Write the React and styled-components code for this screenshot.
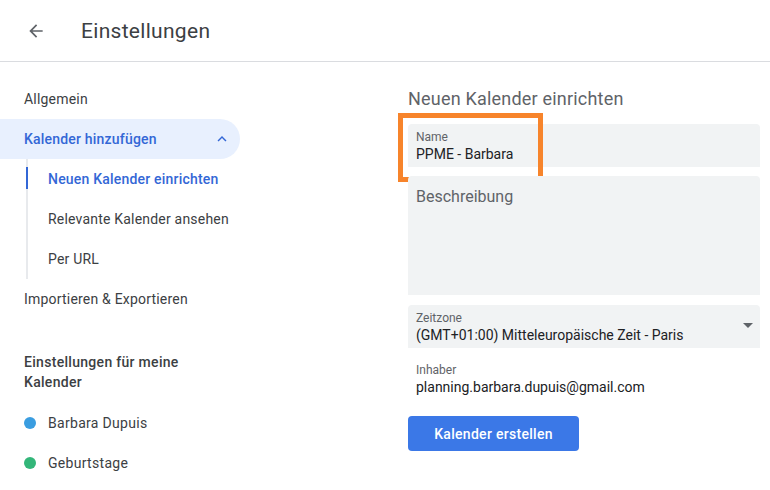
import React from "react";
import styled, { createGlobalStyle } from "styled-components";

const GlobalStyle = createGlobalStyle`
  body {
    margin: 0;
    background: #fff;
    font-family: Roboto, "Liberation Sans", Arial, sans-serif;
    color: #3c4043;
  }
`;

const Page = styled.div`
  width: 770px;
  height: 490px;
  overflow: hidden;
`;

const Header = styled.header`
  height: 62px;
  display: flex;
  align-items: center;
  border-bottom: 1px solid #dadce0;
  box-sizing: border-box;
`;

const BackButton = styled.div`
  width: 24px;
  height: 24px;
  margin-left: 24px;
  margin-right: 33px;
  display: flex;
  align-items: center;
  justify-content: center;
  color: #5f6368;
`;

const Title = styled.h1`
  margin: 0;
  font-size: 21px;
  font-weight: 400;
  color: #3c4043;
  letter-spacing: 0.3px;
`;

const Body = styled.div`
  display: flex;
`;

const Sidebar = styled.nav`
  width: 240px;
  padding-top: 17px;
  flex-shrink: 0;
`;

const NavItem = styled.div`
  height: 40px;
  display: flex;
  align-items: center;
  justify-content: space-between;
  padding-left: 24px;
  padding-right: 9px;
  font-size: 14px;
  letter-spacing: 0.2px;
  color: ${(p) => (p.$active ? "#3367d6" : "#3c4043")};
  font-weight: ${(p) => (p.$active ? 500 : 400)};
  background: ${(p) => (p.$active ? "#e8f0fe" : "transparent")};
  border-radius: 0 20px 20px 0;
`;

const SubList = styled.div`
  margin-left: 26px;
  border-left: 2px solid #e8eaed;
`;

const SubItem = styled.div`
  height: 40px;
  display: flex;
  align-items: center;
  padding-left: 22px;
  margin-left: -2px;
  font-size: 14px;
  letter-spacing: 0.2px;
  color: ${(p) => (p.$active ? "#3367d6" : "#3c4043")};
  font-weight: ${(p) => (p.$active ? 500 : 400)};
  position: relative;
  &::before {
    content: "";
    display: ${(p) => (p.$active ? "block" : "none")};
    position: absolute;
    left: 0;
    top: 8px;
    width: 2px;
    height: 22px;
    background: #3367d6;
  }
`;

const SectionHeading = styled.div`
  padding: 33px 24px 11px;
  font-size: 14px;
  font-weight: 500;
  line-height: 20px;
  color: #3c4043;
  letter-spacing: 0.3px;
`;

const CalendarItem = styled.div`
  height: 40px;
  display: flex;
  align-items: center;
  padding-left: 24px;
  font-size: 14px;
  color: #3c4043;
  letter-spacing: 0.3px;
`;

const Dot = styled.span`
  width: 12px;
  height: 12px;
  border-radius: 50%;
  background: ${(p) => p.$color};
  margin-right: 12px;
`;

const Main = styled.main`
  padding-left: 168px;
  padding-top: 26px;
  width: 352px;
`;

const FormTitle = styled.h2`
  margin: 0 0 14px;
  font-size: 18px;
  font-weight: 400;
  color: #5f6368;
  height: 22px;
  letter-spacing: 0.2px;
`;

const Highlight = styled.div`
  position: relative;
  &::after {
    content: "";
    position: absolute;
    left: -10px;
    top: -11px;
    width: 145px;
    height: 69px;
    border: 5px solid #f7842b;
    box-sizing: border-box;
    pointer-events: none;
  }
`;

const Field = styled.div`
  background: #f1f3f4;
  border-radius: 4px 4px 0 0;
  height: ${(p) => p.$height || 43}px;
  padding: 6px 8px 0;
  box-sizing: border-box;
  margin-bottom: ${(p) => p.$gap || 9}px;
  position: relative;
`;

const Label = styled.div`
  font-size: 12px;
  color: #5f6368;
  line-height: 14px;
`;

const Value = styled.div`
  font-size: 14px;
  color: #202124;
  line-height: 20px;
`;

const Placeholder = styled.div`
  font-size: 16px;
  color: #5f6368;
  padding-top: 5px;
`;

const Caret = styled.span`
  position: absolute;
  right: 7px;
  top: 18px;
  width: 0;
  height: 0;
  border-left: 5px solid transparent;
  border-right: 5px solid transparent;
  border-top: 5px solid #5f6368;
`;

const Plain = styled.div`
  padding: 6px 0 0 8px;
  height: 59px;
  box-sizing: border-box;
`;

const Button = styled.button`
  display: block;
  width: 171px;
  height: 35px;
  border: none;
  border-radius: 4px;
  background: #3b78e7;
  color: #fff;
  font-family: Roboto, "Liberation Sans", Arial, sans-serif;
  font-size: 14px;
  font-weight: 500;
  letter-spacing: 0.3px;
`;

export default function App() {
  return (
    <Page>
      <GlobalStyle />
      <Header>
        <BackButton>
          <svg width="20" height="20" viewBox="0 0 24 24">
            <path
              d="M20 11H7.83l5.59-5.59L12 4l-8 8 8 8 1.41-1.41L7.83 13H20v-2z"
              fill="#5f6368"
            />
          </svg>
        </BackButton>
        <Title>Einstellungen</Title>
      </Header>
      <Body>
        <Sidebar>
          <NavItem>Allgemein</NavItem>
          <NavItem $active>
            Kalender hinzufügen
            <svg width="18" height="18" viewBox="0 0 24 24">
              <path d="M7.41 15.41L12 10.83l4.59 4.58L18 14l-6-6-6 6z" fill="#3367d6" />
            </svg>
          </NavItem>
          <SubList>
            <SubItem $active>Neuen Kalender einrichten</SubItem>
            <SubItem>Relevante Kalender ansehen</SubItem>
            <SubItem>Per URL</SubItem>
          </SubList>
          <NavItem>Importieren &amp; Exportieren</NavItem>
          <SectionHeading>
            Einstellungen für meine
            <br />
            Kalender
          </SectionHeading>
          <CalendarItem>
            <Dot $color="#3a9de0" />
            Barbara Dupuis
          </CalendarItem>
          <CalendarItem>
            <Dot $color="#33b679" />
            Geburtstage
          </CalendarItem>
        </Sidebar>
        <Main>
          <FormTitle>Neuen Kalender einrichten</FormTitle>
          <Highlight>
            <Field>
              <Label>Name</Label>
              <Value>PPME - Barbara</Value>
            </Field>
          </Highlight>
          <Field $height={119} $gap={10}>
            <Placeholder>Beschreibung</Placeholder>
          </Field>
          <Field>
            <Label>Zeitzone</Label>
            <Value>(GMT+01:00) Mitteleuropäische Zeit - Paris</Value>
            <Caret />
          </Field>
          <Plain>
            <Label>Inhaber</Label>
            <Value>planning.barbara.dupuis@gmail.com</Value>
          </Plain>
          <Button>Kalender erstellen</Button>
        </Main>
      </Body>
    </Page>
  );
}
